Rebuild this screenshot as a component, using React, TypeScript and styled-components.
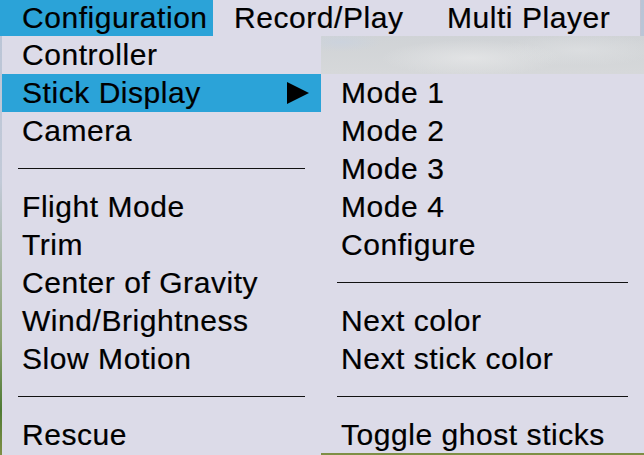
import React from "react";
import styled, { createGlobalStyle } from "styled-components";

const GlobalStyle = createGlobalStyle`
  html, body {
    margin: 0;
    padding: 0;
    overflow: hidden;
  }
  body {
    font-family: "Liberation Sans", Arial, sans-serif;
  }
`;

type Entry = { label?: string; separator?: boolean; active?: boolean; sub?: boolean };

const mainItems: Entry[] = [
  { label: "Controller" },
  { label: "Stick Display", active: true, sub: true },
  { label: "Camera" },
  { separator: true },
  { label: "Flight Mode" },
  { label: "Trim" },
  { label: "Center of Gravity" },
  { label: "Wind/Brightness" },
  { label: "Slow Motion" },
  { separator: true },
  { label: "Rescue" },
];

const stickItems: Entry[] = [
  { label: "Mode 1" },
  { label: "Mode 2" },
  { label: "Mode 3" },
  { label: "Mode 4" },
  { label: "Configure" },
  { separator: true },
  { label: "Next color" },
  { label: "Next stick color" },
  { separator: true },
  { label: "Toggle ghost sticks" },
];

const Arrow = () => (
  <svg width="22" height="22" viewBox="0 0 22 22">
    <polygon points="0,0 22,11 0,22" fill="#000" />
  </svg>
);

const MenuList = ({ items }: { items: Entry[] }) => (
  <>
    {items.map((it, i) =>
      it.separator ? (
        <Separator key={i}>
          <Line />
        </Separator>
      ) : (
        <Item key={i} $active={it.active}>
          <span>{it.label}</span>
          {it.sub && <Arrow />}
        </Item>
      )
    )}
  </>
);

export default function App() {
  return (
    <>
      <GlobalStyle />
      <Scene>
        <MenuBar>
          <BarItem $active $width={213}>Configuration</BarItem>
          <BarItem $width={212} $pad={21}>Record/Play</BarItem>
          <BarItem $width={215}>Multi Player</BarItem>
        </MenuBar>
        <Menus>
          <Dropdown>
            <MenuList items={mainItems} />
          </Dropdown>
          <SubColumn>
            <Sky />
            <SubMenu>
              <MenuList items={stickItems} />
            </SubMenu>
          </SubColumn>
        </Menus>
      </Scene>
    </>
  );
}

const Scene = styled.div`
  width: 644px;
  height: 455px;
  overflow: hidden;
  background: linear-gradient(
    180deg,
    #b9c4d6 0%,
    #c2cad8 40%,
    #8aa070 75%,
    #4f7a34 90%,
    #7f8f45 100%
  );
  color: #000;
  font-size: 30px;
  letter-spacing: 0.55px;
  -webkit-text-stroke: 0.2px #000;
`;

const MenuBar = styled.div`
  display: flex;
  height: 36px;
  width: 640px;
  background: #dcdbe8;
  border-right: 1px solid #c4c3d2;
`;

const BarItem = styled.div<{ $active?: boolean; $width: number; $pad?: number }>`
  width: ${(p) => p.$width}px;
  box-sizing: border-box;
  padding-left: ${(p) => p.$pad ?? 22}px;
  line-height: 35px;
  white-space: nowrap;
  background: ${(p) => (p.$active ? "#2ba3d8" : "transparent")};
`;

const Menus = styled.div`
  display: flex;
  align-items: flex-start;
`;

const Dropdown = styled.div`
  margin-left: 2px;
  width: 319px;
  height: 419px;
  background: #dcdbe8;
`;

const SubColumn = styled.div`
  display: flex;
  flex-direction: column;
  width: 323px;
`;

const Sky = styled.div`
  height: 38px;
  background:
    radial-gradient(ellipse 40px 10px at 20px 6px, rgba(200, 210, 225, 0.6), transparent),
    radial-gradient(ellipse 90px 18px at 150px 22px, rgba(232, 233, 234, 0.7), transparent),
    radial-gradient(ellipse 80px 16px at 260px 14px, rgba(225, 227, 229, 0.6), transparent),
    linear-gradient(180deg, #d0d3d6, #d6d8da);
`;

const SubMenu = styled.div`
  height: 379px;
  background: #dcdbe8;
`;

const Item = styled.div<{ $active?: boolean }>`
  display: flex;
  align-items: center;
  justify-content: space-between;
  height: 38px;
  line-height: 38px;
  padding: 0 12px 0 20px;
  white-space: nowrap;
  background: ${(p) => (p.$active ? "#2ba3d8" : "transparent")};
`;

const Separator = styled.div`
  height: 38px;
  padding: 18px 16px 0;
  box-sizing: border-box;
`;

const Line = styled.div`
  height: 1px;
  background: #111;
`;
